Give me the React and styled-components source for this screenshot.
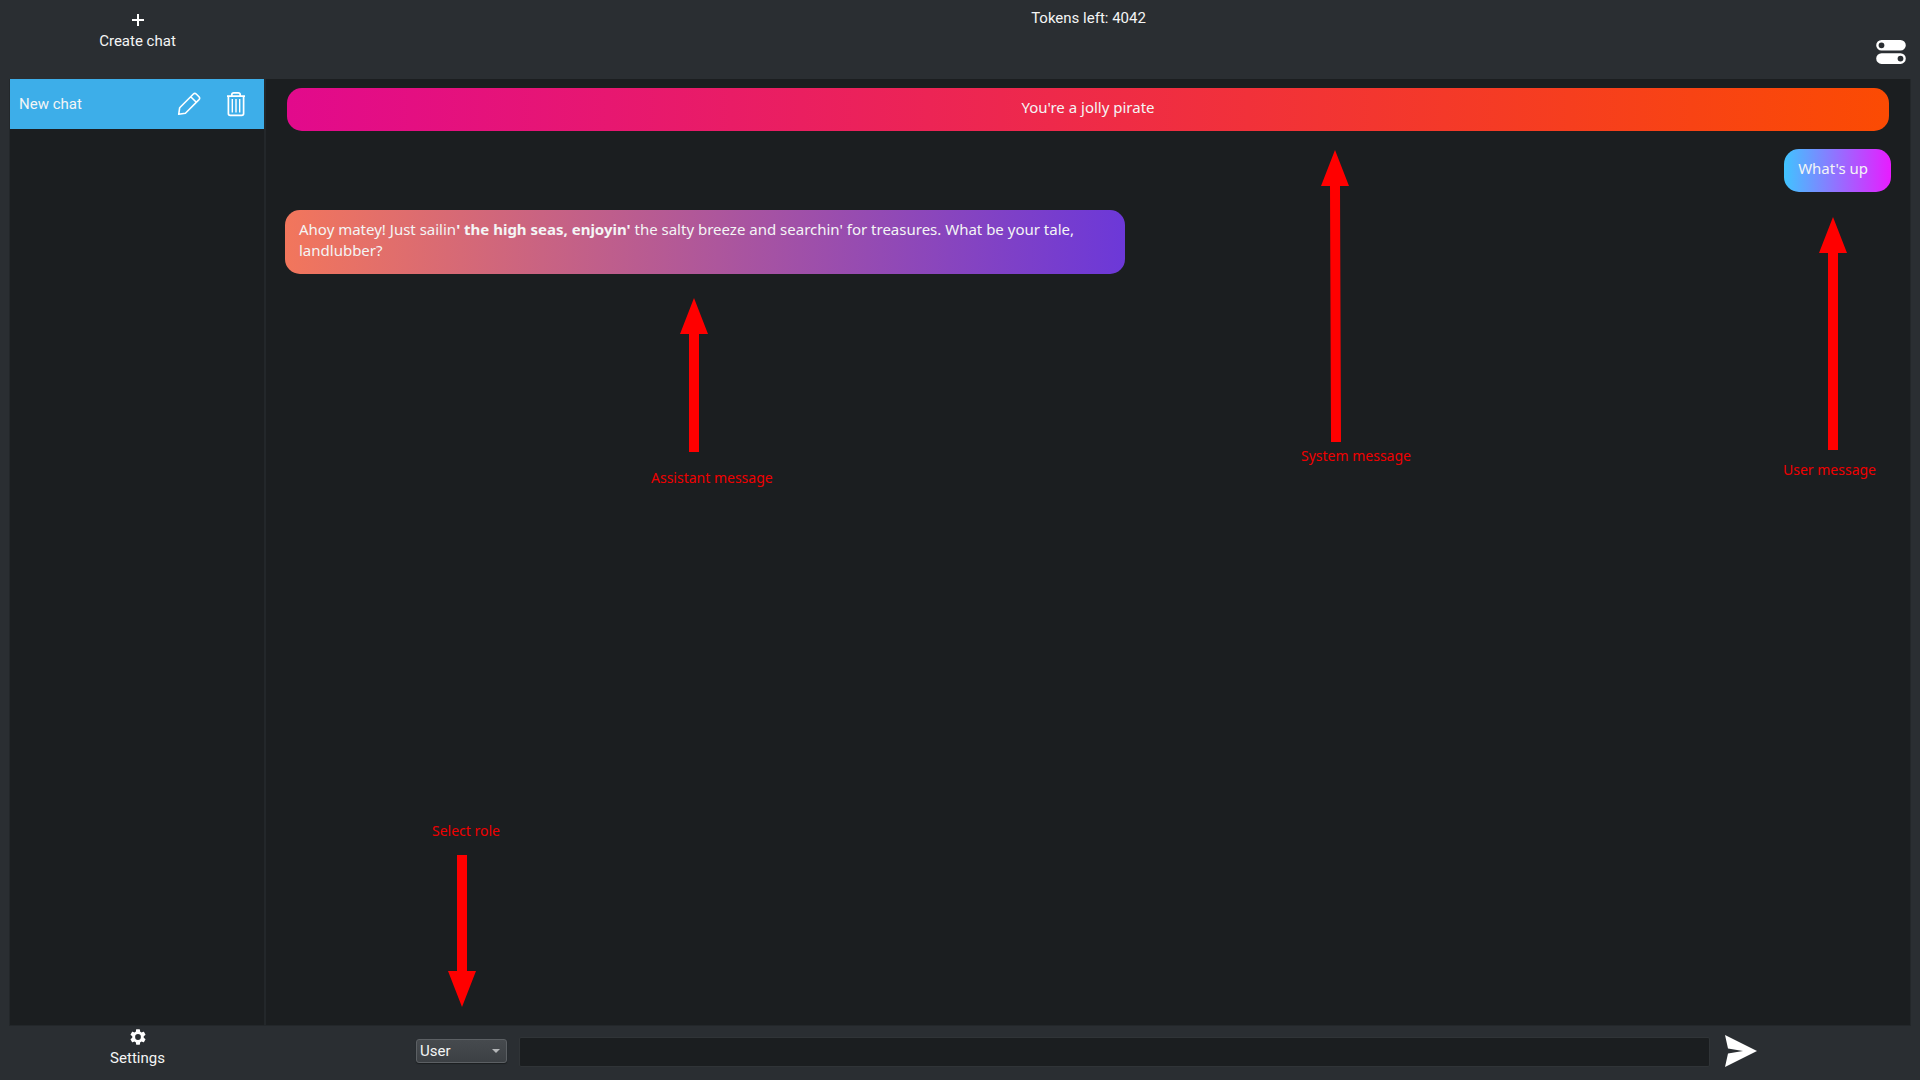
import React from "react";
import styled, { createGlobalStyle } from "styled-components";

const GlobalStyle = createGlobalStyle`
  *, *::before, *::after { box-sizing: border-box; }
  body { margin: 0; background: #2a2e32; }
  button, input, select { font: inherit; color: inherit; }
`;

const Window = styled.div`
  position: relative;
  min-height: 100vh;
  display: grid;
  grid-template-columns: 257px 1fr;
  grid-template-rows: 79px 1fr 54px;
  padding: 0 9px;
  background: #2a2e32;
  color: #f4f5f5;
  font: 15px/18px Roboto, sans-serif;
`;

const ToolButton = styled.button`
  justify-self: center;
  align-self: start;
  display: flex;
  flex-direction: column;
  align-items: center;
  gap: 4px;
  margin-top: ${(p) => p.$top}px;
  padding: 0;
  border: 0;
  background: none;
  svg { display: block; }
`;

const Status = styled.header`
  display: flex;
  flex-direction: column;
  justify-content: space-between;
  align-items: center;
  padding: 9px 0 14px;
`;

const IconButton = styled.button`
  display: flex;
  padding: 0;
  border: 0;
  background: none;
`;

const ToggleButton = styled(IconButton)`
  align-self: flex-end;
  margin-right: 5px;
`;

const Sidebar = styled.nav`
  background: #1b1e20;
  border: 1px solid #23272a;
  border-right-width: 2px;
  border-top: 0;
`;

const ChatItem = styled.div`
  display: flex;
  align-items: center;
  gap: 24px;
  height: 50px;
  padding: 0 17px 0 9px;
  background: #3daee9;
`;

const ChatLink = styled.a`
  flex: 1;
  color: inherit;
  text-decoration: none;
`;

const Messages = styled.main`
  display: flex;
  flex-direction: column;
  align-items: flex-start;
  gap: 18px;
  padding: 9px 19px;
  background: #1b1e20;
  border: 0 solid #23272a;
  border-width: 0 1px 1px 0;
`;

const colours = {
  system: "#e20a8c, #fb4b03",
  user: "#40c4ff, #e81cff",
  assistant: "#f2765c, #6c38d8",
};

const Bubble = styled.p`
  margin: 0 ${(p) => (p.$role === "system" ? 2 : 0)}px;
  padding: 9px 14px 13px;
  max-width: ${(p) => (p.$role === "assistant" ? "840px" : "none")};
  align-self: ${(p) => ({ system: "stretch", user: "flex-end", assistant: "flex-start" })[p.$role]};
  padding-right: ${(p) => (p.$role === "user" ? 23 : 14)}px;
  text-align: ${(p) => (p.$role === "system" ? "center" : "left")};
  border-radius: 15px;
  background: linear-gradient(90deg, ${(p) => colours[p.$role]});
  font: 15px/21px "Noto Sans", sans-serif;
`;

const Composer = styled.form`
  display: flex;
  align-items: flex-start;
  gap: 12px;
  padding: 11px 154px 0 150px;
`;

const RoleBox = styled.label`
  position: relative;
  display: block;
  margin-top: 2px;
  &::after {
    content: "";
    position: absolute;
    right: 7px;
    top: 10px;
    border: 4px solid transparent;
    border-top-color: #b4b6b8;
    border-bottom: 0;
    pointer-events: none;
  }
`;

const RoleSelect = styled.select`
  display: block;
  appearance: none;
  width: 91px;
  height: 24px;
  padding: 0 3px;
  border: 1px solid #5c6064;
  border-radius: 3px;
  background: linear-gradient(#464a4e, #3c4044);
  box-shadow: 0 1px 1px #1b1e20;
`;

const Prompt = styled.input`
  flex: 1;
  min-width: 0;
  height: 30px;
  padding: 0 8px;
  border: 1px solid #303437;
  border-radius: 2px;
  background: #1b1e20;
  outline: 0;
`;

const SendButton = styled(IconButton)`
  margin: -2px 0 0 3px;
`;

const Arrow = styled.svg`
  position: absolute;
  left: ${(p) => p.$x}px;
  top: ${(p) => p.$y}px;
  fill: #ff0000;
  pointer-events: none;
`;

const Note = styled.span`
  position: absolute;
  left: ${(p) => p.$x}px;
  top: ${(p) => p.$y}px;
  color: #f00000;
  font: 14px/20px "Noto Sans", sans-serif;
  white-space: nowrap;
`;

function Pointer({ x, y, length, down, lean = 0 }) {
  const d = `M14 0 L28 36 H19 L${19 + lean} ${length} H${9 + lean} L9 36 H0 Z`;
  return (
    <Arrow $x={x} $y={y} width="28" height={length} aria-hidden="true">
      <path d={d} transform={down ? `rotate(180 14 ${length / 2})` : undefined} />
    </Arrow>
  );
}

const notes = [
  { text: "Assistant message", x: 651, y: 468, arrow: { x: 680, y: 298, length: 154 } },
  { text: "System message", x: 1301, y: 446, arrow: { x: 1321, y: 150, length: 292, lean: 1 } },
  { text: "User message", x: 1783, y: 460, arrow: { x: 1819, y: 217, length: 233 } },
  { text: "Select role", x: 432, y: 821, arrow: { x: 448, y: 855, length: 152, down: true } },
];

export default function App() {
  return (
    <Window>
      <GlobalStyle />
      <ToolButton type="button" $top={12}>
        <svg width="16" height="16" viewBox="0 0 16 16" fill="#fff">
          <path d="M7 2h2v5h5v2H9v5H7V9H2V7h5z" />
        </svg>
        Create chat
      </ToolButton>
      <Status>
        <span>Tokens left: 4042</span>
        <ToggleButton type="button" aria-label="Toggle options">
          <svg width="30" height="25" viewBox="0 0 30 25" fill="#fff" fillRule="evenodd">
            <path d="M5.5 0h19a5.3 5.3 0 0 1 0 10.6h-19a5.3 5.3 0 0 1 0-10.6zM5.5 2.4a2.9 2.9 0 1 0 0 5.8a2.9 2.9 0 0 0 0-5.8z" />
            <path d="M5.5 13.3h19a5.3 5.3 0 0 1 0 10.6h-19a5.3 5.3 0 0 1 0-10.6zM24.5 15.7a2.9 2.9 0 1 0 0 5.8a2.9 2.9 0 0 0 0-5.8z" />
          </svg>
        </ToggleButton>
      </Status>

      <Sidebar>
        <ChatItem>
          <ChatLink href="#chat">New chat</ChatLink>
          <IconButton type="button" aria-label="Rename chat">
            <svg width="24" height="24" viewBox="0 0 24 24" fill="none" stroke="#fff" strokeWidth="1.6" strokeLinejoin="round">
              <path d="M1.7 22.3l1-6.6L16.4 2q1.4-1.3 2.8 0l2.8 2.8q1.3 1.4 0 2.8L8.4 21.2zM13.7 4.7l5.6 5.6" />
            </svg>
          </IconButton>
          <IconButton type="button" aria-label="Delete chat">
            <svg width="22" height="26" viewBox="0 0 22 26" fill="none" stroke="#fff" strokeWidth="1.7">
              <path d="M2 5.2h18M6.8 5V3.8q0-2 2-2h4.4q2 0 2 2V5M3.4 5.2v17.3q0 1.8 1.8 1.8h11.6q1.8 0 1.8-1.8V5.2" />
              <path d="M7.3 8v13.5M11 8v13.5M14.7 8v13.5" strokeWidth="1.4" />
            </svg>
          </IconButton>
        </ChatItem>
      </Sidebar>
      <Messages>
        <Bubble $role="system">You're a jolly pirate</Bubble>
        <Bubble $role="user">What's up</Bubble>
        <Bubble $role="assistant">
          Ahoy matey! Just sailin<b>' the high seas, enjoyin'</b> the salty breeze and searchin' for
          treasures. What be your tale, landlubber?
        </Bubble>
      </Messages>

      <ToolButton type="button" $top={3}>
        <svg width="16" height="16" viewBox="2 2 20 20" fill="#fff">
          <path d="M19.14 12.94c.04-.3.06-.61.06-.94 0-.32-.02-.64-.07-.94l2.03-1.58a.49.49 0 0 0 .12-.61l-1.92-3.32a.49.49 0 0 0-.59-.22l-2.39.96c-.5-.38-1.03-.7-1.62-.94l-.36-2.54a.48.48 0 0 0-.48-.41h-3.84c-.24 0-.43.17-.47.41l-.36 2.54c-.59.24-1.13.57-1.62.94l-2.39-.96a.48.48 0 0 0-.59.22L2.74 8.87c-.12.21-.08.47.12.61l2.03 1.58c-.05.3-.09.63-.09.94s.02.64.07.94l-2.03 1.58a.49.49 0 0 0-.12.61l1.92 3.32c.12.22.37.29.59.22l2.39-.96c.5.38 1.03.7 1.62.94l.36 2.54c.05.24.24.41.48.41h3.84c.24 0 .44-.17.47-.41l.36-2.54c.59-.24 1.13-.56 1.62-.94l2.39.96c.22.08.47 0 .59-.22l1.92-3.32a.49.49 0 0 0-.12-.61zM12 15.6a3.6 3.6 0 1 1 0-7.2a3.6 3.6 0 0 1 0 7.2z" />
        </svg>
        Settings
      </ToolButton>
      <Composer onSubmit={(e) => e.preventDefault()}>
        <RoleBox>
          <RoleSelect aria-label="Role" defaultValue="User">
            <option>User</option>
            <option>Assistant</option>
            <option>System</option>
          </RoleSelect>
        </RoleBox>
        <Prompt type="text" aria-label="Message" />
        <SendButton type="submit" aria-label="Send">
          <svg width="32" height="32" viewBox="0 0 32 32" fill="#fff">
            <path d="M0 0L32 16L0 32L3 18.6L18 16L3 13.4Z" />
          </svg>
        </SendButton>
      </Composer>

      {notes.map((n) => (
        <React.Fragment key={n.text}>
          <Pointer {...n.arrow} />
          <Note $x={n.x} $y={n.y}>{n.text}</Note>
        </React.Fragment>
      ))}
    </Window>
  );
}
